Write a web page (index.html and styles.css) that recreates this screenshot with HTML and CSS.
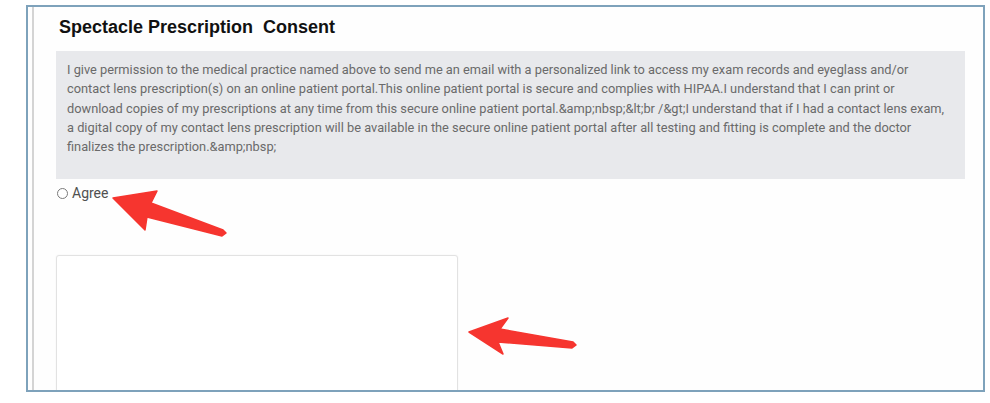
FILE: index.html
```html
<!DOCTYPE html>
<html>
<head>
<meta charset="utf-8">
<link rel="stylesheet" href="styles.css">
</head>
<body>
<div class="frame">
  <div class="panel">
    <h2 class="title">Spectacle Prescription&nbsp; Consent</h2>
    <div class="consent">I give permission to the medical practice named above to send me an email with a personalized link to access my exam records and eyeglass and/or<br>contact lens prescription(s) on an online patient portal.This online patient portal is secure and complies with HIPAA.I understand that I can print or<br>download copies of my prescriptions at any time from this secure online patient portal.&amp;amp;nbsp;&amp;lt;br /&amp;gt;I understand that if I had a contact lens exam,<br>a digital copy of my contact lens prescription will be available in the secure online patient portal after all testing and fitting is complete and the doctor<br>finalizes the prescription.&amp;amp;nbsp;</div>
    <label class="agree"><span class="radio"></span>Agree</label>
    <div class="signature"></div>
  </div>
</div>
<svg class="arrows" width="990" height="403" viewBox="0 0 990 403">
  <polygon class="arrow" points="113,198 157,191 151,203 223,230 226,233 222,236 147,217 145,230"/>
  <polygon class="arrow" points="469,332 508,318 500,329 573,342 576,345 572,348 498,342 503,354"/>
</svg>
</body>
</html>
```
FILE: styles.css
```css
html, body {
  margin: 0;
  padding: 0;
  background: #ffffff;
}
body {
  width: 990px;
  height: 403px;
  overflow: hidden;
  position: relative;
  font-family: Roboto, "Liberation Sans", sans-serif;
}
.frame {
  margin: 5px 0 0 26px;
  width: 955px;
  height: 383px;
  border: 2px solid #7ea2bb;
  overflow: hidden;
  background: #fefefe;
  display: flex;
}
.panel {
  margin-left: 4px;
  border-left: 2px solid #d4d4d4;
  flex: 1;
  padding: 0 18px 0 22px;
  display: flex;
  flex-direction: column;
}
.panel > * {
  flex-shrink: 0;
}
.title {
  margin: 9px 0 13px 3px;
  font-family: "Liberation Sans", Arial, sans-serif;
  font-weight: bold;
  font-size: 18px;
  line-height: 22px;
  color: #111111;
}
.consent {
  background: #e8e9ec;
  height: 128px;
  box-sizing: border-box;
  padding: 9px 11px 0 11px;
  font-size: 12.8px;
  line-height: 19.25px;
  color: #6a6a6a;
  white-space: nowrap;
}
.agree {
  margin-top: 6px;
  display: flex;
  align-items: center;
  font-size: 14px;
  line-height: 16px;
  color: #505050;
  gap: 4px;
}
.radio {
  width: 9px;
  height: 9px;
  border: 1px solid #7a7a7a;
  border-radius: 50%;
  background: #ffffff;
  margin-left: 1px;
}
.signature {
  margin-top: 54px;
  width: 400px;
  height: 180px;
  border: 1px solid #e2e2e2;
  border-radius: 3px;
  box-shadow: 0 0 2px rgba(0,0,0,0.06);
  background: #ffffff;
}
.arrows {
  position: absolute;
  left: 0;
  top: 0;
  pointer-events: none;
}
.arrow {
  fill: #f6352f;
  stroke: #f6352f;
  stroke-width: 1.5;
  stroke-linejoin: round;
}
```
